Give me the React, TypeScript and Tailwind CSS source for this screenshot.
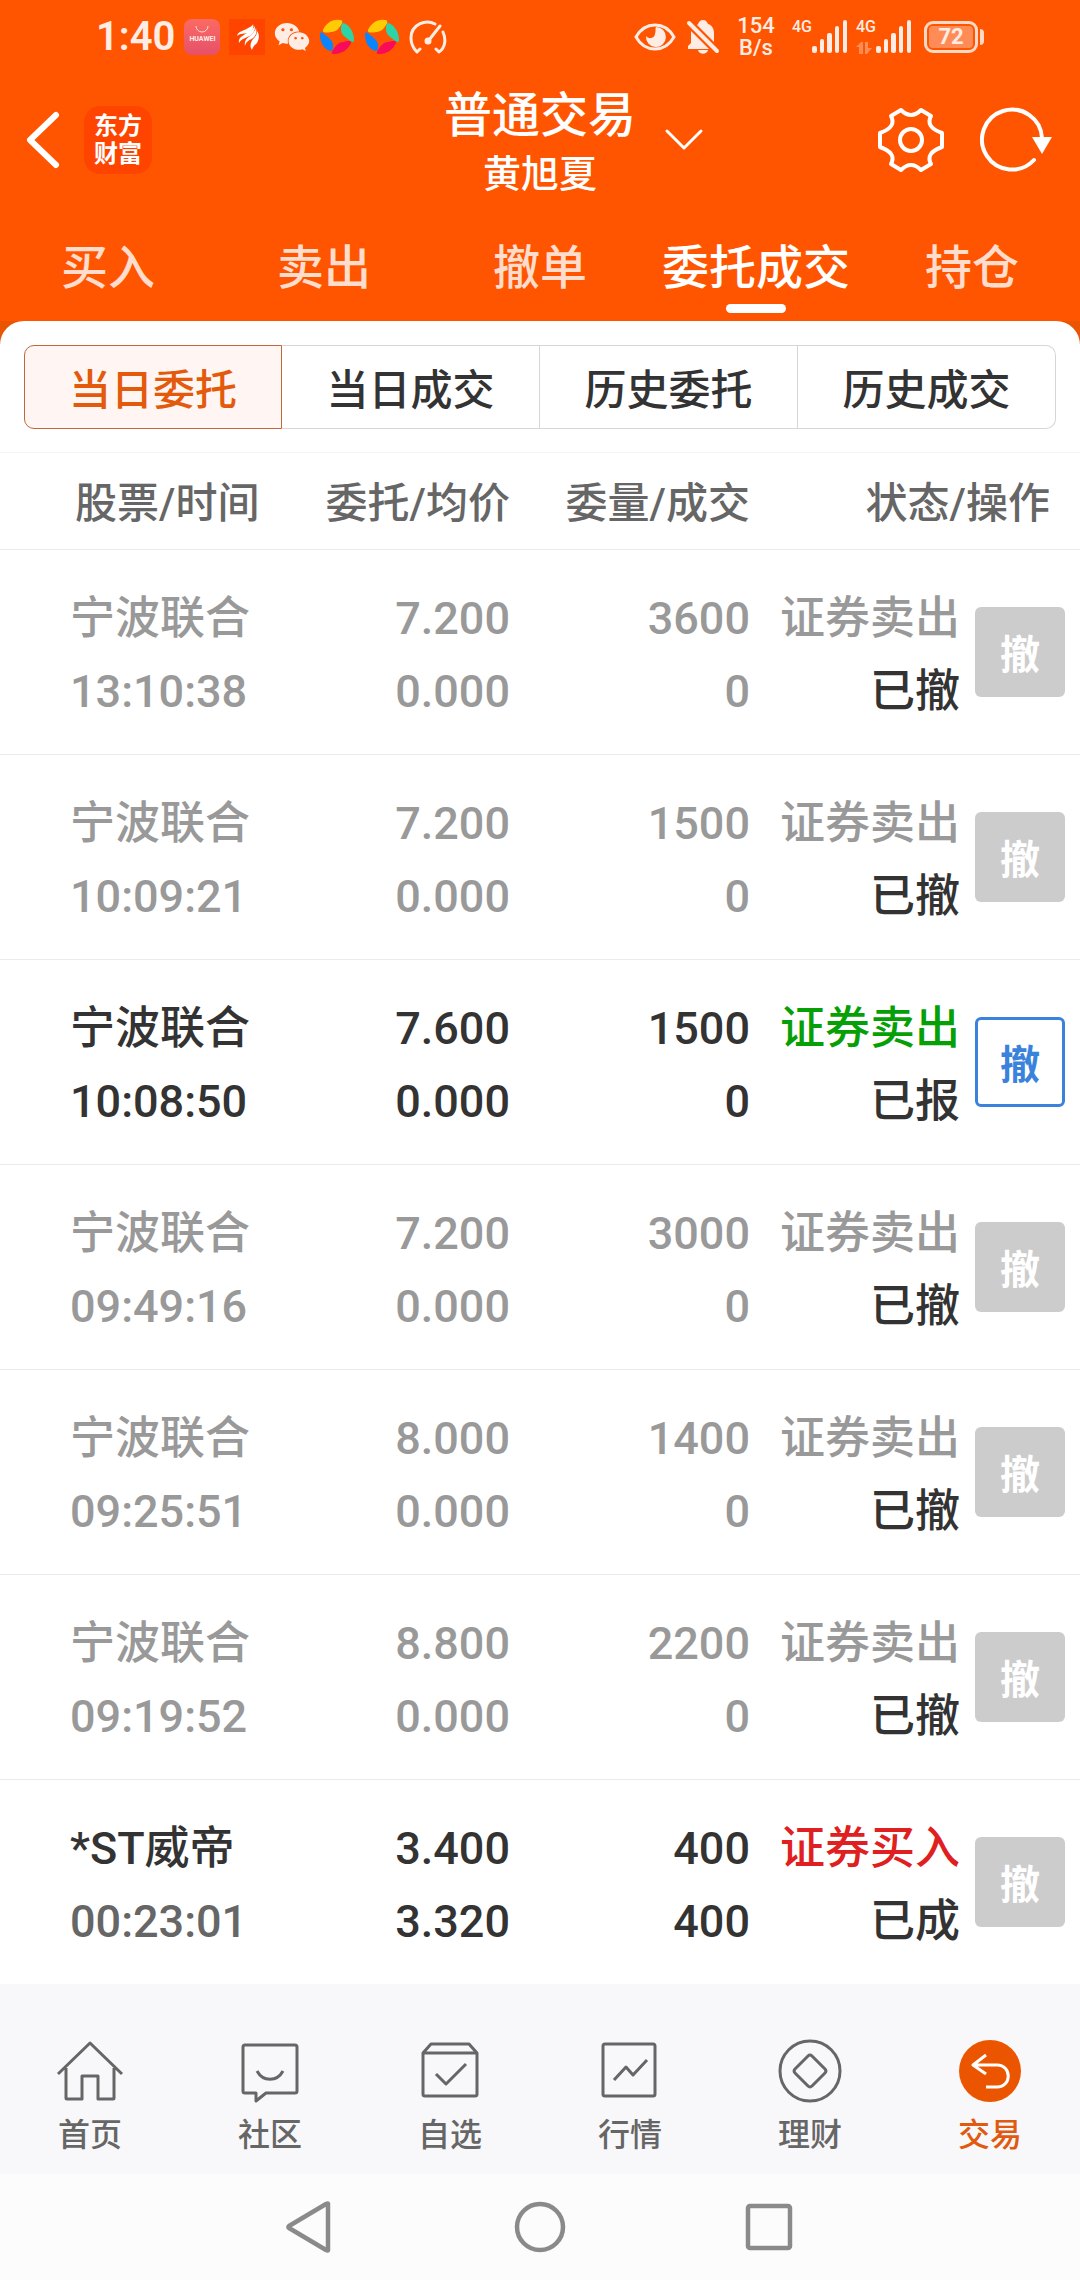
import { useState } from "react";
import type { ReactNode } from "react";
import { FaWeixin } from "react-icons/fa";

type OrderState = "cancelled" | "pending" | "filled";

interface Order {
  name: string;
  time: string;
  price: string;
  average: string;
  amount: string;
  dealt: string;
  side: string;
  status: string;
  state: OrderState;
}

const ORDERS: Order[] = [
  { name: "宁波联合", time: "13:10:38", price: "7.200", average: "0.000", amount: "3600", dealt: "0", side: "证券卖出", status: "已撤", state: "cancelled" },
  { name: "宁波联合", time: "10:09:21", price: "7.200", average: "0.000", amount: "1500", dealt: "0", side: "证券卖出", status: "已撤", state: "cancelled" },
  { name: "宁波联合", time: "10:08:50", price: "7.600", average: "0.000", amount: "1500", dealt: "0", side: "证券卖出", status: "已报", state: "pending" },
  { name: "宁波联合", time: "09:49:16", price: "7.200", average: "0.000", amount: "3000", dealt: "0", side: "证券卖出", status: "已撤", state: "cancelled" },
  { name: "宁波联合", time: "09:25:51", price: "8.000", average: "0.000", amount: "1400", dealt: "0", side: "证券卖出", status: "已撤", state: "cancelled" },
  { name: "宁波联合", time: "09:19:52", price: "8.800", average: "0.000", amount: "2200", dealt: "0", side: "证券卖出", status: "已撤", state: "cancelled" },
  { name: "*ST威帝", time: "00:23:01", price: "3.400", average: "3.320", amount: "400", dealt: "400", side: "证券买入", status: "已成", state: "filled" },
];

const MAIN_TABS = ["买入", "卖出", "撤单", "委托成交", "持仓"];
const SUB_TABS = ["当日委托", "当日成交", "历史委托", "历史成交"];

/* ---------- status bar ---------- */

function Pinwheel() {
  return (
    <svg width="36" height="36" viewBox="0 0 36 36" aria-hidden="true">
      <path d="M4 11C7 4 14 0 20 1c4 0 4 2 2 5-3 5-6 7-10 7-4 1-9 1-8-2z" fill="#ffcb05" />
      <path d="M24 4c6 1 11 9 11 17 0 3-2 2-5 0-4-3-8-6-8-10 0-3 0-7 2-7z" fill="#2ed3a6" />
      <path d="M32 24c-3 7-10 11-16 11-4 0-4-1-2-4 3-5 6-8 10-8 4-1 9-2 8 1z" fill="#fa0a5a" />
      <path d="M12 32C5 31 1 23 1 16c0-4 2-3 4-1 4 3 8 6 9 10 0 4 0 7-2 7z" fill="#0a84ff" />
    </svg>
  );
}

function Signal() {
  return (
    <svg width="36" height="34" viewBox="0 0 36 34" fill="#ffede5" aria-hidden="true">
      <rect x="0" y="26" width="5" height="7" rx="2" />
      <rect x="8" y="19" width="4" height="14" rx="2" />
      <rect x="15" y="13" width="5" height="20" rx="2" />
      <rect x="23" y="6" width="4" height="27" rx="2" />
      <rect x="31" y="0" width="4" height="33" rx="2" />
    </svg>
  );
}

function StatusBar() {
  return (
    <div className="flex h-18 items-center justify-between px-24 pt-0.5 font-[Roboto,sans-serif] text-[#ffede5]">
      <div className="flex items-center gap-[9px]">
        <span className="text-[40px] leading-12 font-semibold">1:40</span>
        <span className="flex size-9 flex-col items-center rounded-lg bg-gradient-to-b from-[#fc6a63] to-[#e6506a] pt-1.5">
          <svg width="14" height="8" viewBox="0 0 14 8" fill="none" stroke="#ffd9d6" aria-hidden="true">
            <path d="M1 1a6 6 0 0 0 12 0" />
          </svg>
          <span className="mt-0.5 text-[7px] leading-2 font-bold">HUAWEI</span>
        </span>
        <svg width="36" height="36" viewBox="0 0 36 36" aria-hidden="true">
          <path d="M0 0h36v36H0z" fill="#ff4400" />
          <g fill="#fff">
            <path d="M8 17C9 12 15 12 21 8c2-1 3-2 3-3 1 3 0 5-2 7-4 4-9 1-14 5z" />
            <path d="M10 24c-1-5 3-7 8-10 4-2 6-4 8-7 0 4-1 6-4 9-4 3-9 3-12 8z" />
            <path d="M16 27c-1-5 2-8 5-10 3-3 5-5 6-8 1 5 0 7-3 10-3 2-7 3-8 8z" />
            <path d="M23 31c-3-4-1-9 2-12 2-2 3-4 3-7 3 4 2 8 0 12-2 2-4 3-5 7z" />
          </g>
        </svg>
        <FaWeixin size={36} />
        <Pinwheel />
        <Pinwheel />
        <svg width="38" height="34" viewBox="0 0 38 34" fill="none" stroke="#ffede5" strokeWidth="3" strokeLinecap="round" strokeLinejoin="round" aria-hidden="true">
          <path d="M26 4C17-1 2 4 2 18c0 6 3 11 6 14l3-3M34 12c4 9 1 17-4 20l-3-3M20 20 31 6" />
          <circle cx="19" cy="21" r="2" fill="#ffede5" />
        </svg>
      </div>

      <div className="flex items-center">
        <svg width="42" height="30" viewBox="0 0 42 30" aria-hidden="true">
          <path d="M2 15C11-1 31-1 40 15 31 31 11 31 2 15z" fill="none" stroke="#ffede5" strokeWidth="3" />
          <path d="M22 5a10 10 0 1 1-10 9 5 5 0 0 0 9-2c1-3 0-5 1-7z" fill="#ffede5" />
        </svg>
        <svg className="ml-2.5" width="34" height="36" viewBox="0 0 34 36" fill="#ffede5" aria-hidden="true">
          <path d="M12 5c1-2 2-4 5-4s4 2 5 4c4 1 6 5 6 9v9L11 6zM5 12l18 18H2v-3l3-3zM12 31h10c-1 5-9 5-10 0z" />
          <path d="m3 4 28 28" stroke="#ffede5" strokeWidth="4" strokeLinecap="round" />
        </svg>
        <span className="ml-4 flex w-10 flex-col items-center text-[22px] leading-[22px] font-medium">
          <span>154</span>
          <span>B/s</span>
        </span>
        <span className="ml-4 h-9 text-[16px] leading-4 font-medium">4G</span>
        <Signal />
        <span className="ml-2 flex h-9 flex-col justify-between text-[16px] leading-4 font-medium">
          4G
          <svg width="16" height="13" viewBox="0 0 16 13" fill="#ff8c57" aria-hidden="true">
            <path d="M3 12V5H0l5-5h2v12zM9 0h3v6h4l-5 6H9z" />
          </svg>
        </span>
        <Signal />
        <span className="ml-3 flex h-8 w-[54px] items-center justify-center rounded-[9px] border-3 border-[#ffd9c6] bg-[#ff8c57] bg-clip-content px-0.5 py-0.5 text-[22px] leading-6 font-bold">
          72
        </span>
        <span className="ml-0.5 h-4 w-1 rounded-r bg-[#ffd9c6]" />
      </div>
    </div>
  );
}

/* ---------- header ---------- */

function TitleBar() {
  return (
    <div className="grid h-34 grid-cols-[1fr_auto_1fr] items-center">
      <div className="flex items-center gap-6 pl-6.5">
        <button type="button" aria-label="返回">
          <svg width="34" height="58" viewBox="0 0 34 58" fill="none" stroke="#fff" strokeWidth="6" strokeLinecap="round" strokeLinejoin="round">
            <path d="M30 4 4 29l26 25" />
          </svg>
        </button>
        <div className="flex size-17 flex-col items-center justify-center rounded-2xl bg-[#ff4400] text-2xl leading-7 font-bold">
          <span>东方</span>
          <span>财富</span>
        </div>
      </div>

      <div className="pt-2 text-center font-medium">
        <h1 className="text-5xl leading-15">普通交易</h1>
        <p className="text-[38px] leading-14">黄旭夏</p>
      </div>

      <div className="flex items-center justify-between pr-7 pl-7">
        <button type="button" aria-label="切换账户">
          <svg width="40" height="24" viewBox="0 0 40 24" fill="none" stroke="#fff" strokeWidth="3" strokeLinecap="round" strokeLinejoin="round">
            <path d="m3 3 17 17L37 3" />
          </svg>
        </button>
        <div className="flex items-center gap-9">
          <button type="button" aria-label="设置">
            <svg width="66" height="66" viewBox="0 0 66 66" fill="none" stroke="#fff" strokeWidth="4" strokeLinejoin="round">
              <path d="M23 3Q33 13 43 3L53 9Q47 20 64 26L64 40Q47 46 53 57L43 63Q33 53 23 63L13 57Q19 46 2 40L2 26Q19 20 13 9Z" />
              <circle cx="33" cy="33" r="11" />
            </svg>
          </button>
          <button type="button" aria-label="刷新">
            <svg width="72" height="66" viewBox="0 0 72 66">
              <path d="M62 31A30 30 0 1 0 54 53" fill="none" stroke="#fff" strokeWidth="4" strokeLinecap="round" />
              <path d="M52 30h20L62 47z" fill="#fff" />
            </svg>
          </button>
        </div>
      </div>
    </div>
  );
}

interface MainTabsProps {
  active: string;
  onChange: (tab: string) => void;
}

function MainTabs({ active, onChange }: MainTabsProps) {
  return (
    <nav className="grid grid-cols-5 pt-7 pb-2">
      {MAIN_TABS.map((tab) => (
        <button
          key={tab}
          type="button"
          onClick={() => onChange(tab)}
          className={`flex flex-col items-center text-[47px] leading-16 font-medium whitespace-nowrap ${
            tab === active ? "text-white" : "text-[#ffdccb]"
          }`}
        >
          {tab}
          <span className={`mt-1 h-[9px] w-15 rounded-full ${tab === active ? "bg-white" : ""}`} />
        </button>
      ))}
    </nav>
  );
}

/* ---------- orders ---------- */

function OrderRow({ order }: { order: Order }) {
  const cancelled = order.state === "cancelled";
  const pending = order.state === "pending";
  const main = cancelled ? "text-[#999999]" : "text-[#333333]";
  const time = cancelled ? "text-[#999999]" : pending ? "text-[#333333]" : "text-[#666666]";
  const side = cancelled ? "text-[#999999]" : pending ? "text-[#06a006]" : "text-[#e02020]";

  return (
    <tr className="border-b border-[#ebebeb] text-[45px] leading-[73px] font-medium whitespace-nowrap last:border-b-0">
      <td className={`pt-8 pb-[26px] pl-17.5 ${main}`}>
        <div>{order.name}</div>
        <div className={time}>{order.time}</div>
      </td>
      <td className={`pt-8 pb-[26px] text-right ${main}`}>
        <div>{order.price}</div>
        <div>{order.average}</div>
      </td>
      <td className={`pt-8 pb-[26px] text-right ${main}`}>
        <div>{order.amount}</div>
        <div>{order.dealt}</div>
      </td>
      <td className="pt-8 pb-[26px] text-right">
        <div className={side}>{order.side}</div>
        <div className="text-[#333333]">{order.status}</div>
      </td>
      <td className="pl-[15px]">
        <button
          type="button"
          disabled={!pending}
          className={`flex size-[90px] items-center justify-center rounded-md pt-1.5 text-[40px] font-bold ${
            pending ? "border-3 border-[#3b82dc] bg-white text-[#3b82dc]" : "bg-[#cccccc] text-white"
          }`}
        >
          撤
        </button>
      </td>
    </tr>
  );
}

function OrderTable() {
  return (
    <table className="w-full table-fixed border-collapse border-t border-[#f5f5f5]">
      <colgroup>
        <col className="w-1/4" />
        <col className="w-2/9" />
        <col className="w-2/9" />
        <col className="w-7/36" />
        <col className="w-1/9" />
      </colgroup>
      <thead>
        <tr className="h-[97px] border-b border-[#ebebeb] text-[42px] leading-14 whitespace-nowrap text-[#666666]">
          <th className="pt-1.5 pl-[75px] text-left font-medium">股票/时间</th>
          <th className="pt-1.5 text-right font-medium">委托/均价</th>
          <th className="pt-1.5 text-right font-medium">委量/成交</th>
          <th colSpan={2} className="pt-1.5 pr-7.5 text-right font-medium">
            状态/操作
          </th>
        </tr>
      </thead>
      <tbody>
        {ORDERS.map((order) => (
          <OrderRow key={order.time} order={order} />
        ))}
      </tbody>
    </table>
  );
}

/* ---------- bottom navigation ---------- */

const NAV_ITEMS: { label: string; icon: ReactNode }[] = [
  {
    label: "首页",
    icon: <path d="M2 36 34 5l32 31M10 30v30q0 1 1 1h15V38h16v23h15q1 0 1-1V30" />,
  },
  {
    label: "社区",
    icon: (
      <>
        <path d="M9 7h50q2 0 2 2v44q0 2-2 2H30l-10 8v-8H9q-2 0-2-2V9q0-2 2-2z" />
        <path d="M21 33c6 11 20 11 26 0" />
      </>
    ),
  },
  {
    label: "自选",
    icon: (
      <path d="M7 15 15 6h38l8 9v41q0 2-2 2H9q-2 0-2-2zM7 15h54M20 36l10 10 20-20" />
    ),
  },
  {
    label: "行情",
    icon: (
      <path d="M9 6h48q2 0 2 2v48q0 2-2 2H9q-2 0-2-2V8q0-2 2-2zM18 42l12-13 7 8 14-15" />
    ),
  },
  {
    label: "理财",
    icon: (
      <>
        <circle cx="34" cy="33" r="30" />
        <path d="m32 18-13 13q-2 2 0 4l13 13q2 2 4 0l13-13q2-2 0-4L36 18q-2-2-4 0z" />
      </>
    ),
  },
  {
    label: "交易",
    icon: (
      <>
        <circle cx="34" cy="33" r="31" fill="#eb5500" stroke="none" />
        <path d="M30 17 17 27l13 9M17 27h24c15 0 15 22 0 22H30" stroke="#fff" />
      </>
    ),
  },
];

function BottomNav() {
  return (
    <nav className="grid grid-cols-6 bg-[#f8f8fa] pt-[54px] pb-[15px]">
      {NAV_ITEMS.map(({ label, icon }) => (
        <a
          key={label}
          href="#"
          className={`flex flex-col items-center gap-1.5 text-[32px] leading-12 font-medium ${
            label === "交易" ? "text-[#e05a10]" : "text-[#666666]"
          }`}
        >
          <svg width="68" height="67" viewBox="0 0 68 67" fill="none" stroke="#666" strokeWidth="3" strokeLinejoin="round" aria-hidden="true">
            {icon}
          </svg>
          {label}
        </a>
      ))}
    </nav>
  );
}

function SystemBar() {
  return (
    <div className="flex h-[106px] items-center justify-center gap-[178px] bg-[#fcfcfc]">
      <button type="button" aria-label="后退">
        <svg width="52" height="52" viewBox="0 0 52 52" fill="none" stroke="#8a8a8a" strokeWidth="4.5" strokeLinejoin="round">
          <path d="M44 3v46q0 1-2 0L5 27q-1-1 0-2L42 3q2-1 2 0z" />
        </svg>
      </button>
      <button type="button" aria-label="主屏幕">
        <svg width="52" height="52" viewBox="0 0 52 52" fill="none" stroke="#8a8a8a" strokeWidth="4.5">
          <circle cx="26" cy="26" r="23" />
        </svg>
      </button>
      <button type="button" aria-label="最近任务">
        <svg width="52" height="52" viewBox="0 0 52 52" fill="none" stroke="#8a8a8a" strokeWidth="4.5">
          <rect x="4" y="5" width="42" height="42" rx="2" />
        </svg>
      </button>
    </div>
  );
}

export default function App() {
  const [mainTab, setMainTab] = useState("委托成交");
  const [subTab, setSubTab] = useState("当日委托");

  return (
    <div className="min-h-screen bg-white font-[Roboto,'Noto_Sans_CJK_SC',sans-serif]">
      <header className="bg-[#ff5500] text-white">
        <StatusBar />
        <TitleBar />
        <MainTabs active={mainTab} onChange={setMainTab} />
      </header>

      <main className="bg-[#ea5504]">
        <div className="rounded-t-3xl bg-white pt-6">
          <div className="mx-6 mb-[23px] grid grid-cols-4">
            {SUB_TABS.map((tab) => (
              <button
                key={tab}
                type="button"
                onClick={() => setSubTab(tab)}
                className={`h-21 border pt-1.5 text-[42px] font-medium first:rounded-l-[10px] last:rounded-r-[10px] ${
                  tab === subTab
                    ? "border-[#c0683a] bg-[#fff5f2] text-[#e35a0c]"
                    : "border-l-0 border-[#d6d6d6] text-[#333333]"
                }`}
              >
                {tab}
              </button>
            ))}
          </div>
          <OrderTable />
        </div>
      </main>

      <BottomNav />
      <SystemBar />
    </div>
  );
}
